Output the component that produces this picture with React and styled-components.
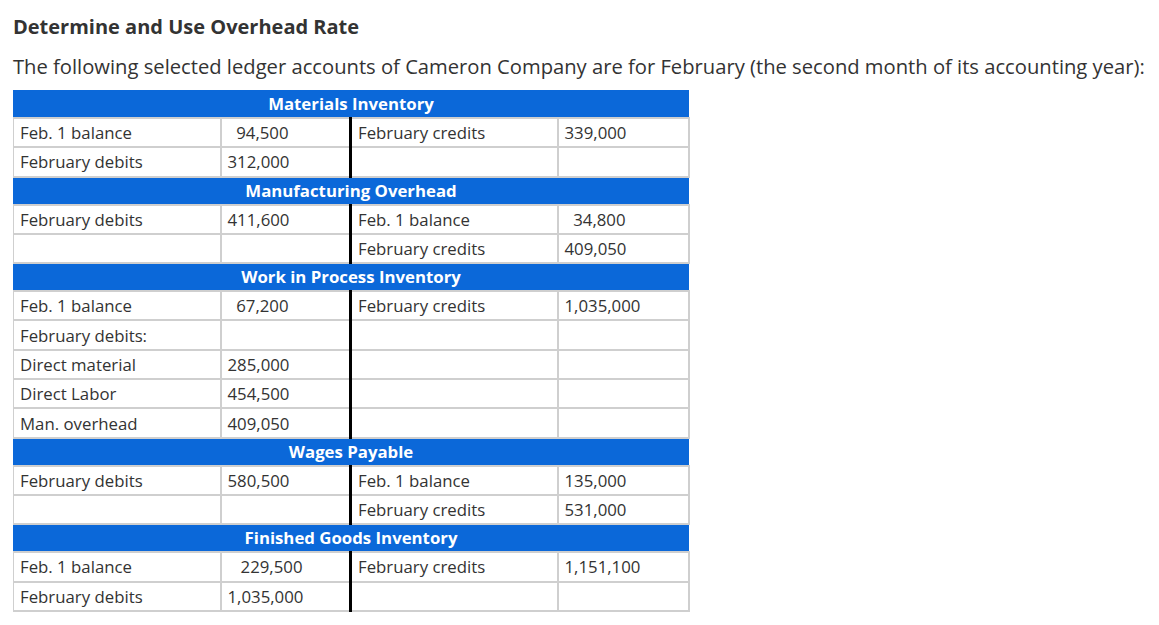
import React from "react"
import styled, {createGlobalStyle} from "styled-components"

// Styles
const GlobalStyles = createGlobalStyle`
  body {
    margin: 0;
    background: #fff;
    font-family: "Open Sans", "Liberation Sans", sans-serif;
    color: #333;
  }
`

const columns = [207, 130, 207, 131]

const ledgers = [
    {
        title: "Materials Inventory",
        rows: [
            ["Feb. 1 balance", "\u00a0\u00a094,500", "February credits", "339,000"],
            ["February debits", "312,000", "", ""],
        ],
    },
    {
        title: "Manufacturing Overhead",
        rows: [
            ["February debits", "411,600", "Feb. 1 balance", "\u00a0\u00a034,800"],
            ["", "", "February credits", "409,050"],
        ],
    },
    {
        title: "Work in Process Inventory",
        rows: [
            ["Feb. 1 balance", "\u00a0\u00a067,200", "February credits", "1,035,000"],
            ["February debits:", "", "", ""],
            ["Direct material", "285,000", "", ""],
            ["Direct Labor", "454,500", "", ""],
            ["Man. overhead", "409,050", "", ""],
        ],
    },
    {
        title: "Wages Payable",
        rows: [
            ["February debits", "580,500", "Feb. 1 balance", "135,000"],
            ["", "", "February credits", "531,000"],
        ],
    },
    {
        title: "Finished Goods Inventory",
        rows: [
            ["Feb. 1 balance", "\u00a0\u00a0\u00a0229,500", "February credits", "1,151,100"],
            ["February debits", "1,035,000", "", ""],
        ],
    },
]

// Component - App
const App = () => {
    return <>
        <GlobalStyles/>
        <Page>
            <Heading>Determine and Use Overhead Rate</Heading>
            <Intro>The following selected ledger accounts of Cameron Company are for February (the second month of its accounting year):</Intro>
            <Ledger>
                <colgroup>
                    {columns.map((w, i) => <Col key={i} $w={w}/>)}
                </colgroup>
                <tbody>
                {ledgers.map(account => (
                    <React.Fragment key={account.title}>
                        <tr>
                            <Title colSpan={4}>{account.title}</Title>
                        </tr>
                        {account.rows.map((row, idx) => (
                            <Row key={idx}>
                                {row.map((cell, i) => (
                                    <Cell key={i} $split={i === 2}>{cell}</Cell>
                                ))}
                            </Row>
                        ))}
                    </React.Fragment>
                ))}
                </tbody>
            </Ledger>
        </Page>
    </>
}

export default App

const Page = styled.div`
  padding: 14px 0 14px 13px;
`

const Heading = styled.h3`
  margin: 0;
  font-size: 20px;
  font-weight: 700;
  line-height: 26px;
  color: #333;
`

const Intro = styled.p`
  margin: 13px 0 10px;
  font-size: 20.2px;
  line-height: 27px;
  color: #333;
  white-space: nowrap;
`

const Ledger = styled.table`
  border-collapse: collapse;
  table-layout: fixed;
  width: 674px;
  font-size: 16.8px;
`

const Col = styled.col`
  width: ${p => p.$w}px;
`

const Title = styled.td`
  background: #0b68d9;
  color: #fff;
  font-weight: 700;
  text-align: center;
  height: 26px;
  padding: 0;
  line-height: 22px;
  border: 1px solid #0b68d9;
`

const Row = styled.tr`
  height: 29.3px;
`

const Cell = styled.td`
  padding: 0 6px;
  border: 2px solid #cfcfcf;
  border-left: ${p => p.$split ? "3px solid #000" : "2px solid #cfcfcf"};
  white-space: pre;
  color: #333;
  vertical-align: middle;

  &:first-child {
    border-left: 1px solid #cfcfcf;
  }
`
